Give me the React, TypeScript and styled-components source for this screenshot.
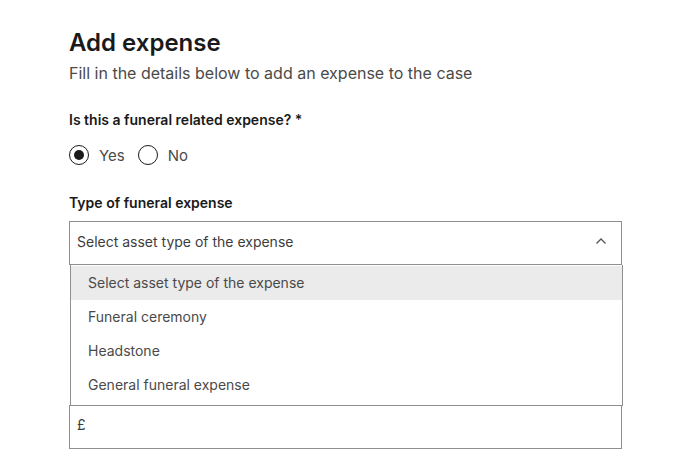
import React from "react";
import styled, { createGlobalStyle } from "styled-components";

const GlobalStyle = createGlobalStyle`
  body {
    margin: 0;
    background: #fff;
    font-family: "Inter", "Liberation Sans", Arial, sans-serif;
    color: #1a1a1a;
  }
`;

const Page = styled.div`
  padding: 27px 0 0 69px;
  width: 553px;
`;

const Title = styled.h1`
  margin: 0;
  font-size: 24px;
  line-height: 32px;
  font-weight: 600;
  color: #1a1a1a;
`;

const Subtitle = styled.p`
  margin: 3px 0 0;
  font-size: 16px;
  line-height: 22px;
  color: #4a4a4a;
`;

const Field = styled.div<{ top: number }>`
  margin-top: ${(p) => p.top}px;
  position: relative;
`;

const Label = styled.div`
  font-size: 14px;
  line-height: 20px;
  font-weight: 600;
  color: #1a1a1a;
`;

const RadioRow = styled.div`
  display: flex;
  align-items: center;
  gap: 13px;
  margin-top: 15px;
`;

const RadioOption = styled.label`
  display: flex;
  align-items: center;
  gap: 10px;
  font-size: 15px;
  color: #4a4a4a;
`;

const RadioCircle = styled.span<{ checked?: boolean }>`
  width: 20px;
  height: 20px;
  box-sizing: border-box;
  border: 1.5px solid #1a1a1a;
  border-radius: 50%;
  display: flex;
  align-items: center;
  justify-content: center;
  &::after {
    content: "";
    width: 10px;
    height: 10px;
    border-radius: 50%;
    background: #1a1a1a;
    display: ${(p) => (p.checked ? "block" : "none")};
  }
`;

const SelectBox = styled.div`
  margin-top: 8px;
  height: 44px;
  box-sizing: border-box;
  border: 1px solid #8f8f8f;
  display: flex;
  align-items: center;
  justify-content: space-between;
  padding: 0 14px 4px 7px;
  font-size: 14px;
  color: #3d3d3d;
`;

const Menu = styled.ul`
  position: absolute;
  left: 1px;
  top: 100%;
  width: 553px;
  margin: 0;
  padding: 1px 0 3px;
  list-style: none;
  box-sizing: border-box;
  border: 1px solid #8f8f8f;
  border-top: none;
  background: #fff;
  z-index: 2;
`;

const MenuItem = styled.li<{ active?: boolean }>`
  height: 34px;
  display: flex;
  align-items: center;
  padding: 0 0 2px 17px;
  box-sizing: border-box;
  font-size: 14px;
  color: #4a4a4a;
  background: ${(p) => (p.active ? "#ebebeb" : "transparent")};
`;

const Input = styled.div`
  height: 44px;
  box-sizing: border-box;
  border: 1px solid #8f8f8f;
  display: flex;
  align-items: center;
  padding: 0 0 6px 7px;
  font-size: 14px;
  color: #3d3d3d;
`;

const options = [
  "Select asset type of the expense",
  "Funeral ceremony",
  "Headstone",
  "General funeral expense",
];

export default function App() {
  return (
    <>
      <GlobalStyle />
      <Page>
        <Title>Add expense</Title>
        <Subtitle>Fill in the details below to add an expense to the case</Subtitle>

        <Field top={26}>
          <Label>Is this a funeral related expense? *</Label>
          <RadioRow>
            <RadioOption>
              <RadioCircle checked />
              Yes
            </RadioOption>
            <RadioOption>
              <RadioCircle />
              No
            </RadioOption>
          </RadioRow>
        </Field>

        <Field top={28}>
          <Label>Type of funeral expense</Label>
          <SelectBox>
            <span>Select asset type of the expense</span>
            <svg width="12" height="8" viewBox="0 0 12 8" fill="none">
              <path d="M1.5 6.5 6 2l4.5 4.5" stroke="#555" strokeWidth="1.3" />
            </svg>
          </SelectBox>
          <Menu>
            {options.map((o, i) => (
              <MenuItem key={o} active={i === 0}>
                {o}
              </MenuItem>
            ))}
          </Menu>
        </Field>

        <Field top={140}>
          <Input>£</Input>
        </Field>
      </Page>
    </>
  );
}
